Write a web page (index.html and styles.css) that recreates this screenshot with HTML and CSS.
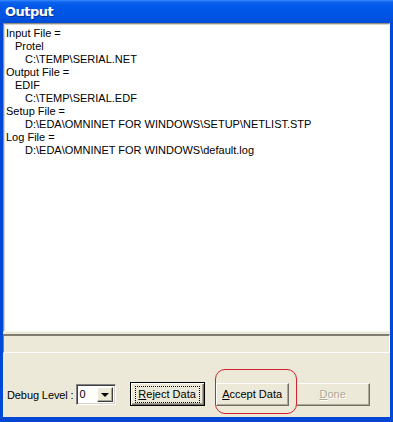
FILE: index.html
```html
<!DOCTYPE html>
<html lang="en">
<head>
  <meta charset="UTF-8" />
  <title>Output</title>
  <meta name="viewport" content="width=device-width, initial-scale=1" />
  <link rel="stylesheet" href="styles.css">
</head>
<body>

  <div class="window">
    <header class="title-bar">
      <span class="title">Output</span>
    </header>

    <main class="client">
      <!-- Zone de sortie -->
      <div class="output-box">
        <div class="lvl0">Input File =</div>
        <div class="lvl1">Protel</div>
        <div class="lvl2">C:\TEMP\SERIAL.NET</div>
        <div class="lvl0">Output File =</div>
        <div class="lvl1">EDIF</div>
        <div class="lvl2">C:\TEMP\SERIAL.EDF</div>
        <div class="lvl0">Setup File =</div>
        <div class="lvl2">D:\EDA\OMNINET FOR WINDOWS\SETUP\NETLIST.STP</div>
        <div class="lvl0">Log File =</div>
        <div class="lvl2">D:\EDA\OMNINET FOR WINDOWS\default.log</div>
      </div>

      <div class="status-panel"></div>

      <!-- Actions -->
      <div class="controls">
        <span class="label">Debug Level :</span>
        <div class="combo">
          <span class="combo-value">0</span>
          <span class="combo-btn"><span class="arrow"></span></span>
        </div>
        <button class="btn btn-default" type="button"><span class="focus"><u>R</u>eject Data</span></button>
        <button class="btn btn-accept" type="button"><u>A</u>ccept Data</button>
        <button class="btn btn-disabled" type="button" disabled><u>D</u>one</button>
      </div>

      <div class="highlight"></div>
    </main>
  </div>

</body>
</html>
```

FILE: styles.css
```css
html, body { margin: 0; padding: 0; }
body {
  width: 393px; height: 422px; overflow: hidden;
  font-family: "Liberation Sans", Arial, sans-serif;
  font-size: 11px; color: #000;
}

.window {
  height: 422px; box-sizing: border-box;
  display: flex; flex-direction: column;
  background: #0050dd;
  border-left: 3px solid #0049d6;
  border-right: 3px solid #0049d6;
  border-bottom: 5px solid #0046d2;
}

/* ===== Barre de titre ===== */
.title-bar {
  height: 23px; flex: none;
  margin: 0 -3px;
  padding-left: 5px;
  display: flex; align-items: center;
  background: linear-gradient(to bottom, #3a8cff 0, #0d63ee 2px, #0058e8 30%, #0054e3 70%, #004cd6 100%);
}
.title {
  font-family: "DejaVu Sans", sans-serif; font-weight: bold; font-size: 13px;
  color: #fff; text-shadow: 1px 1px #0a2a8a;
  letter-spacing: -0.5px;
  margin-top: -1px;
}

/* ===== Zone cliente ===== */
.client {
  position: relative;
  flex: 1;
  background: #ece9d8;
  display: flex; flex-direction: column;
}

.output-box {
  height: 309px; box-sizing: border-box;
  background: #fff;
  border-top: 1px solid #8e8c80;
  border-left: 1px solid #8e8c80;
  border-right: 1px solid #f4f3ec;
  border-bottom: 1px solid #f4f3ec;
  box-shadow: inset 1px 1px 0 #d8d6cc;
  padding: 3px 2px;
  line-height: 13px;
}
.lvl0 { padding-left: 0; }
.lvl1 { padding-left: 9px; }
.lvl2 { padding-left: 19px; }

.status-panel {
  height: 19px; box-sizing: border-box;
  margin-top: 2px;
  border-top: 2px solid #7f7d72;
  border-left: 1px solid #7f7d72;
  border-bottom: 1px solid #fff;
  border-right: 1px solid #fff;
}

.controls {
  display: flex; align-items: center;
  margin-top: 29px;
  padding-left: 4px;
  height: 24px;
}
.label { margin-top: 1px; letter-spacing: -0.1px; }

.combo {
  display: flex; align-items: stretch;
  width: 40px; height: 21px; box-sizing: border-box;
  margin-left: 2px;
  background: #fff;
  border-top: 1px solid #808080; border-left: 1px solid #808080;
  border-right: 1px solid #fff; border-bottom: 1px solid #fff;
  box-shadow: inset 1px 1px 0 #404040, inset -1px -1px 0 #d4d0c8;
}
.combo-value { flex: 1; padding: 3px 0 0 3px; }
.combo-btn {
  width: 16px; margin: 2px 2px 2px 0; box-sizing: border-box;
  background: #ece9d8;
  border-top: 1px solid #fff; border-left: 1px solid #fff;
  border-right: 1px solid #404040; border-bottom: 1px solid #404040;
  box-shadow: inset -1px -1px 0 #aca899;
  display: flex; align-items: center; justify-content: center;
}
.arrow {
  width: 0; height: 0;
  border-left: 4px solid transparent; border-right: 4px solid transparent;
  border-top: 4px solid #000;
  margin-top: 1px;
}

.btn {
  height: 23px; box-sizing: border-box;
  font-family: "Liberation Sans", Arial, sans-serif; font-size: 11px;
  background: #ece9d8; color: #000;
  border-top: 1px solid #fff; border-left: 1px solid #fff;
  border-right: 1px solid #716f64; border-bottom: 1px solid #716f64;
  box-shadow: inset -1px -1px 0 #aca899;
  padding: 0; margin: 0;
  display: flex; align-items: center; justify-content: center;
}
.btn u { text-decoration: underline; text-underline-offset: 1px; }

.btn-default {
  width: 75px; height: 24px;
  margin-left: 14px;
  border: 1px solid #000;
  box-shadow: inset 1px 1px 0 #fff, inset -1px -1px 0 #716f64, inset -2px -2px 0 #aca899;
}
.btn-default .focus {
  display: flex; align-items: center; justify-content: center;
  width: 63px; height: 14px;
  border: 1px dotted #000;
  padding-bottom: 1px;
}

.btn-accept { width: 73px; margin-left: 11px; }
.btn-disabled {
  width: 74px; margin-left: 7px;
  color: #aca899; text-shadow: 1px 1px #fff;
}

/* Annotation rouge */
.highlight {
  position: absolute;
  left: 212px; top: 346px;
  width: 82px; height: 45px; box-sizing: border-box;
  border: 1px solid #d3222e;
  border-radius: 10px;
}
```
